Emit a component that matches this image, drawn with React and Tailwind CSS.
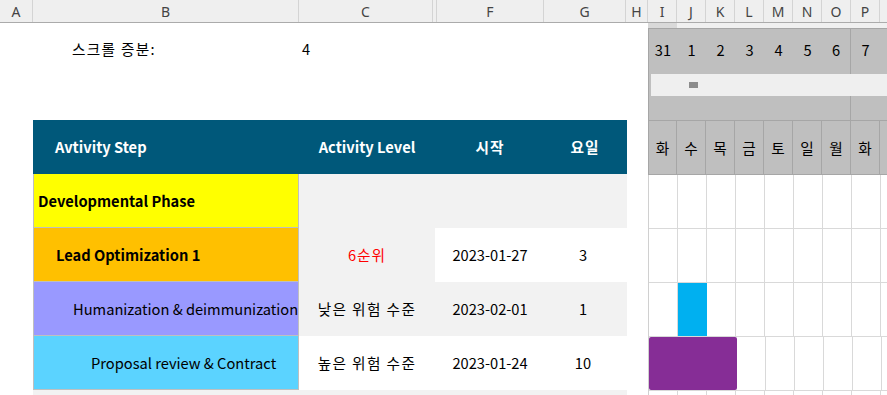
const COLS = [
  { l: 'A', w: 'w-[33px]' },
  { l: 'B', w: 'w-[266px]' },
  { l: 'C', w: 'w-[134px]' },
  { l: '', w: 'w-[4px]' },
  { l: 'F', w: 'w-[107px]' },
  { l: 'G', w: 'w-[82px]' },
  { l: 'H', w: 'w-[22px]' },
  { l: 'I', w: 'w-[29px]' },
  { l: 'J', w: 'w-[29px]' },
  { l: 'K', w: 'w-[29px]' },
  { l: 'L', w: 'w-[29px]' },
  { l: 'M', w: 'w-[29px]' },
  { l: 'N', w: 'w-[29px]' },
  { l: 'O', w: 'w-[29px]' },
  { l: 'P', w: 'w-[29px]' },
  { l: '', w: 'w-[29px]' },
]

const DATES = ['31', '1', '2', '3', '4', '5', '6', '7']
const DAYS = ['화', '수', '목', '금', '토', '일', '월', '화']

const ROWS = [
  {
    step: 'Developmental Phase',
    stepCls: 'bg-[#ffff00] font-bold pl-[4px]',
    level: '',
    start: '',
    days: '',
    levelBg: 'bg-[#f2f2f2]',
    restBg: 'bg-[#f2f2f2]',
  },
  {
    step: 'Lead Optimization 1',
    stepCls: 'bg-[#ffc000] font-bold pl-[22px]',
    level: '6순위',
    levelCls: 'text-[#ff0000] tracking-[1px]',
    start: '2023-01-27',
    days: '3',
    levelBg: 'bg-[#f2f2f2]',
    restBg: 'bg-white',
  },
  {
    step: 'Humanization & deimmunization',
    stepCls: 'bg-[#9999ff] pl-[39px]',
    level: '낮은 위험 수준',
    levelCls: 'tracking-[1.4px]',
    start: '2023-02-01',
    days: '1',
    levelBg: 'bg-[#f2f2f2]',
    restBg: 'bg-[#f2f2f2]',
  },
  {
    step: 'Proposal review & Contract',
    stepCls: 'bg-[#5bd3ff] pl-[57px]',
    level: '높은 위험 수준',
    levelCls: 'tracking-[1.4px]',
    start: '2023-01-24',
    days: '10',
    levelBg: 'bg-white',
    restBg: 'bg-white',
  },
]

function ColumnHeader() {
  return (
    <div className="flex h-[23px] bg-[#efefef] border-b border-[#ababab] text-[14px] text-[#444] font-['Noto_Sans',sans-serif]">
      {COLS.map((c, i) => (
        <div
          key={i}
          className={`${c.w} shrink-0 flex items-center justify-center border-r border-[#d4d4d4]`}
        >
          {c.l}
        </div>
      ))}
    </div>
  )
}

function GridCells({ bar }) {
  // purple spans I..K, blue fills J
  if (bar === 'purple') {
    return (
      <>
        <div className="w-[88px] shrink-0 bg-[#862d96] rounded-[2px]" />
        {[0, 1, 2, 3, 4, 5].map((i) => (
          <div key={i} className="w-[29px] shrink-0 border-r border-[#d9d9d9]" />
        ))}
      </>
    )
  }
  return DATES.concat(['']).map((_, i) => (
    <div
      key={i}
      className={`w-[29px] shrink-0 border-r border-[#d9d9d9] ${
        bar === 'blue' && i === 1 ? 'bg-[#00b0f0] border-r-[#00b0f0]' : ''
      }`}
    />
  ))
}

function Gantt() {
  return (
    <div className="w-[239px] shrink-0 flex flex-col">
      <div className="flex h-[5px]">
        <div className="w-[29px] bg-[#d9d9d9]" />
        <div className="flex-1 bg-[#f0f0f0]" />
      </div>
      <div className="bg-[#bfbfbf] border-l border-[#a6a6a6]">
        <div className="flex h-[46px] border-t border-[#a6a6a6]">
          {DATES.map((d, i) => (
            <div
              key={i}
              className={`${i === 0 ? 'w-[28px]' : 'w-[29px]'} shrink-0 flex items-center justify-center pb-[3px] ${
                i === 6 ? 'border-r border-[#a6a6a6]' : ''
              }`}
            >
              {d}
            </div>
          ))}
        </div>
        <div className="h-[22px] flex items-center pl-[2px]">
          <div className="flex-1 h-[22px] bg-[#efefef] flex items-center pl-[38px]">
            <div className="w-[9px] h-[6px] bg-[#8c8c8c]" />
          </div>
        </div>
        <div className="flex h-[24px]">
          <div className="w-[202px] shrink-0 border-r border-[#a6a6a6]" />
        </div>
        <div className="flex h-[55px] border-y border-[#a6a6a6]">
          {DAYS.concat(['']).map((d, i) => (
            <div
              key={i}
              className={`${i === 0 ? 'w-[28px]' : 'w-[29px]'} shrink-0 flex items-center justify-center border-r border-[#a6a6a6]`}
            >
              {d}
            </div>
          ))}
        </div>
      </div>
      <div className="border-l border-[#d0d0d0]">
        {[null, null, 'blue', 'purple', null].map((bar, r) => (
          <div key={r} className="flex h-[54px] border-b border-[#d9d9d9]">
            <GridCells bar={bar} />
          </div>
        ))}
      </div>
    </div>
  )
}

function Table() {
  return (
    <div className="w-[648px] shrink-0 flex flex-col">
      <div className="h-[5px]" />
      <div className="flex h-[46px] items-center pb-[4px]">
        <div className="w-[72px] shrink-0" />
        <div className="w-[227px] shrink-0 tracking-[1.3px]">스크롤 증분:</div>
        <div className="pl-[3px]">4</div>
      </div>
      <div className="h-[46px]" />
      <div className="ml-[33px] w-[594px] flex h-[54px] bg-[#00587a] text-white font-bold">
        <div className="w-[266px] shrink-0 flex items-center pl-[22px]">Avtivity Step</div>
        <div className="w-[136px] shrink-0 flex items-center justify-center">Activity Level</div>
        <div className="w-[110px] shrink-0 flex items-center justify-center tracking-[1px]">시작</div>
        <div className="w-[82px] shrink-0 flex items-center justify-center tracking-[1px] pr-[2px]">요일</div>
      </div>
      {ROWS.map((r, i) => (
        <div key={i} className="ml-[33px] w-[594px] flex h-[54px]">
          <div
            className={`w-[266px] shrink-0 flex items-center overflow-hidden whitespace-nowrap border-x border-b border-[#bfbfbf] ${r.stepCls}`}
          >
            {r.step}
          </div>
          <div className={`w-[136px] shrink-0 flex items-center justify-center ${r.levelBg} ${r.levelCls || ''}`}>
            {r.level}
          </div>
          <div className={`w-[110px] shrink-0 flex items-center justify-center ${r.restBg}`}>{r.start}</div>
          <div className={`w-[82px] shrink-0 flex items-center justify-center pr-[6px] ${r.restBg}`}>{r.days}</div>
        </div>
      ))}
      <div className="ml-[33px] w-[594px] h-[54px] bg-[#f2f2f2]" />
    </div>
  )
}

export default function App() {
  return (
    <div className="w-[887px] h-[395px] overflow-hidden bg-white text-black text-[14.67px] font-['Noto_Sans_CJK_KR',sans-serif]">
      <ColumnHeader />
      <div className="flex">
        <Table />
        <Gantt />
      </div>
    </div>
  )
}
